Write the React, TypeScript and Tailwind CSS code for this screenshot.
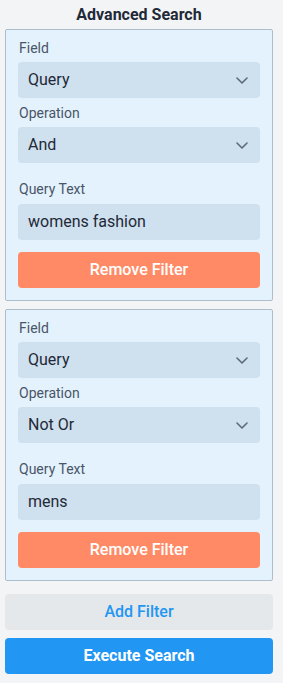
import React from "react";

const Chevron = () => (
  <svg width="12" height="7" viewBox="0 0 12 7" fill="none" className="shrink-0">
    <path d="M1 1l5 5 5-5" stroke="#5f6b7a" strokeWidth="1.6" strokeLinecap="round" strokeLinejoin="round" />
  </svg>
);

const Select = ({ value }: { value: string }) => (
  <div className="h-9 rounded-[4px] bg-[#cfe0ee] flex items-center justify-between pl-[10px] pr-[12px]">
    <span className="text-[16px] text-[#1f2937]">{value}</span>
    <Chevron />
  </div>
);

const Label = ({ children, className = "" }: { children: React.ReactNode; className?: string }) => (
  <div className={"text-[14px] leading-4 pl-px text-[#4a5568] " + className}>{children}</div>
);

const FilterPanel = ({ op, text }: { op: string; text: string }) => (
  <div className="border border-[#aebdca] bg-[#e3f2fd] rounded-[2px] px-3 pt-[10px] pb-3 flex flex-col">
    <Label className="mb-[6px]">Field</Label>
    <Select value="Query" />
    <Label className="mt-[7px] mb-[6px]">Operation</Label>
    <Select value={op} />
    <Label className="mt-[18px] mb-[7px]">Query Text</Label>
    <div className="h-9 rounded-[4px] bg-[#cfe0ee] flex items-center pl-[10px]">
      <span className="text-[16px] text-[#1f2937]">{text}</span>
    </div>
    <button className="mt-3 h-9 rounded-[4px] bg-[#ff8a65] text-white text-[16px] font-medium">Remove Filter</button>
  </div>
);

export default function App() {
  return (
    <div className="min-h-[683px] bg-[#f3f4f6] pl-[5px] pr-[10px]" style={{ fontFamily: "Roboto, 'Noto Sans', sans-serif" }}>
      <div className="h-[29px] flex items-center justify-center text-[16px] font-bold text-[#1f2937] pt-[1px]">Advanced Search</div>
      <div className="flex flex-col gap-2">
        <FilterPanel op="And" text="womens fashion" />
        <FilterPanel op="Not Or" text="mens" />
      </div>
      <button className="mt-[13px] w-full h-9 rounded-[4px] bg-[#e5e8eb] text-[#2196f3] text-[16px] font-medium">Add Filter</button>
      <button className="mt-2 w-full h-9 rounded-[4px] bg-[#2196f3] text-white text-[16px] font-bold">Execute Search</button>
    </div>
  );
}
